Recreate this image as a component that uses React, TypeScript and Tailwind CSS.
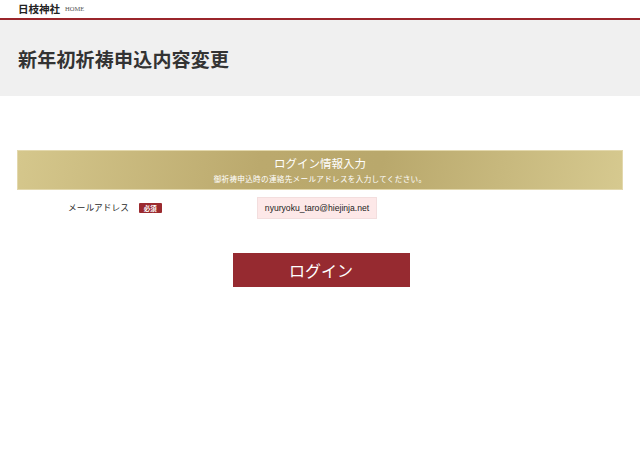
import React from 'react'

const jp = 'font-["Noto_Sans_CJK_JP","Noto_Sans",sans-serif]'

export default function App() {
  return (
    <div className={`min-h-[460px] w-full bg-white text-[#222] ${jp}`}>
      {/* site header */}
      <header className="border-b-2 border-[#9a252b]">
        <div className="flex h-[18px] items-center gap-[5px] px-[18px]">
          <span className="text-[10.5px] font-bold leading-none text-[#222]">日枝神社</span>
          <span className='font-["Liberation_Serif",serif] text-[6.5px] leading-none text-[#555]'>HOME</span>
        </div>
      </header>

      {/* page title band */}
      <div className="flex h-[76px] items-center bg-[#f0f0f0] px-[18px]">
        <h1 className="text-[19px] font-bold leading-none tracking-[0.2px] text-[#333]">新年初祈祷申込内容変更</h1>
      </div>

      <main className="px-[17px] pt-[54px]">
        {/* section heading */}
        <div className="flex h-[40px] flex-col items-center justify-center gap-[6px] border border-[#e3d8ad] bg-[linear-gradient(100deg,#d5c78c_0%,#bba96d_40%,#b9a86c_60%,#d6c98f_100%)] pt-[1px] text-white">
          <p className="text-[11.5px] leading-none">ログイン情報入力</p>
          <p className="text-[7.6px] leading-none tracking-[0.3px]">御祈祷申込時の連絡先メールアドレスを入力してください。</p>
        </div>

        {/* form row */}
        <div className="mt-[7px] flex items-center">
          <div className="flex w-[240px] items-center pl-[51px]">
            <span className="text-[8.7px] leading-none text-[#2a2a2a]">メールアドレス</span>
            <span className="ml-[10px] flex h-[10px] w-[23px] items-center justify-center rounded-[1px] bg-[#9b2a2f] text-[6.5px] font-bold leading-none text-white">必須</span>
          </div>
          <div className="flex h-[22px] w-[120px] items-center justify-center border border-[#f3dede] bg-[#fde8e8] font-['Liberation_Sans',sans-serif] text-[8.6px] text-[#222]">
            nyuryoku_taro@hiejinja.net
          </div>
        </div>

        {/* submit */}
        <div className="mt-[34px] flex justify-center pl-[2px]">
          <button className="flex h-[34px] w-[177px] items-center justify-center bg-[#962a30] text-[16px] leading-none text-white">
            ログイン
          </button>
        </div>
      </main>
    </div>
  )
}
